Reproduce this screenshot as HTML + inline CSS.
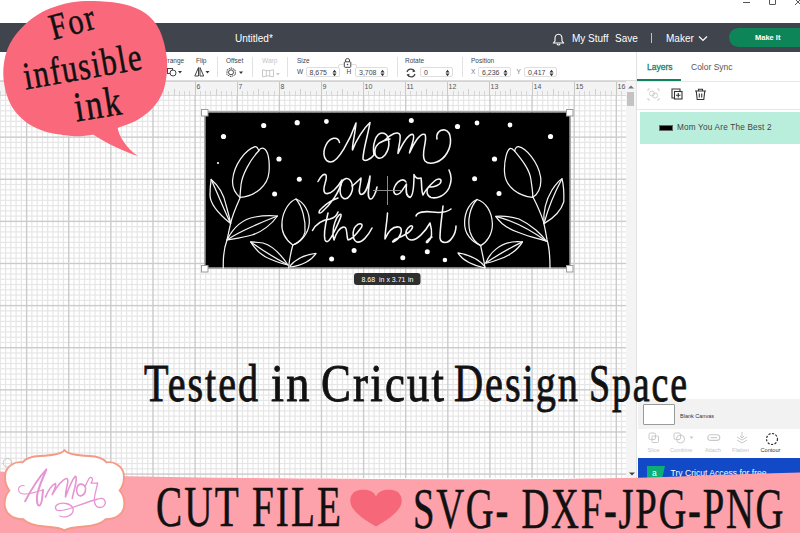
<!DOCTYPE html>
<html><head><meta charset="utf-8">
<style>
*{margin:0;padding:0;box-sizing:border-box}
html,body{width:800px;height:533px;overflow:hidden;background:#fff;font-family:"Liberation Sans",sans-serif}
.a{position:absolute}
#titlebar{left:0;top:0;width:800px;height:23px;background:#fff}
#header{left:0;top:23px;width:800px;height:29px;background:#40444c}
#toolbar{left:0;top:52px;width:637px;height:29px;background:#fff;border-bottom:1px solid #dcdcdc}
#ruler{left:0;top:81px;width:626px;height:14px;background:#f3f3f3;border-top:1px solid #d4d4d4}
#canvas{left:0;top:95px;width:626px;height:383px;background:#fff;overflow:hidden}
#scroll{left:626px;top:81px;width:10px;height:397px;background:#f4f4f4}
#panel{left:636px;top:52px;width:164px;height:430px;background:#fff;border-left:1px solid #e2e2e2}
.lbl{font-size:6.5px;color:#444}
.inp{height:10.5px;border:1px solid #dedede;border-radius:2px;font-size:7px;color:#444;background:#fff}
.tl{font-size:5.6px;color:#c4c4c4}
.bt{font-family:"Liberation Serif",serif;font-weight:normal;color:#111;white-space:nowrap;line-height:1;-webkit-text-stroke:0.9px #111}
.wt{color:#fff;font-size:10px}
</style></head><body>
<div id="titlebar" class="a">
 <div class="a" style="left:743px;top:2px;width:7px;height:1px;background:#555"></div>
 <div class="a" style="left:769px;top:-3px;width:7px;height:8px;border:1px solid #555;border-radius:1px"></div>
 <svg class="a" style="left:794px;top:-2px" width="8" height="8"><path d="M1 1 L7 7 M7 1 L1 7" stroke="#555" stroke-width="1"/></svg>
</div>
<div id="header" class="a">
 <div class="a wt" style="left:235px;top:10px;font-size:10px;letter-spacing:0px">Untitled*</div>
 <svg class="a" style="left:552px;top:10px" width="13" height="13" viewBox="0 0 13 13"><path d="M6.5 1.2 C4 1.2 3 3.2 3 5.5 V8 L1.3 10 H11.7 L10 8 V5.5 C10 3.2 9 1.2 6.5 1.2 Z M5 11 A1.6 1.6 0 0 0 8 11" fill="none" stroke="#fff" stroke-width="1.1" stroke-linejoin="round"/></svg>
 <div class="a wt" style="left:572px;top:10px">My Stuff</div>
 <div class="a wt" style="left:615px;top:10px">Save</div>
 <div class="a" style="left:651px;top:10px;width:1px;height:10px;background:#c9b7d0"></div>
 <div class="a wt" style="left:666px;top:10px">Maker</div>
 <svg class="a" style="left:698px;top:12px" width="10" height="7" viewBox="0 0 10 7"><path d="M1 1.5 L5 5.5 L9 1.5" fill="none" stroke="#fff" stroke-width="1.2"/></svg>
 <div class="a" style="left:729px;top:5px;width:90px;height:19px;border-radius:10px;background:#0e8558"></div>
 <div class="a" style="left:755px;top:10px;font-size:7.5px;font-weight:bold;color:#fff">Make It</div>
</div>
<div id="toolbar" class="a">
 <div class="a lbl" style="left:161px;top:5px">Arrange</div>
 <svg class="a" style="left:166px;top:15px" width="16" height="10"><rect x="1.5" y="1.5" width="5" height="5" fill="none" stroke="#444" stroke-width="1"/><circle cx="7" cy="6" r="3" fill="#fff" stroke="#444" stroke-width="1"/><path d="M12 4 h4 l-2 2.5z" fill="#333"/></svg>
 <div class="a lbl" style="left:196px;top:5px">Flip</div>
 <svg class="a" style="left:194px;top:15px" width="16" height="10"><path d="M4.5 0.5 L0.8 9 H4.5 Z M6 0.5 L9.7 9 H6 Z" fill="none" stroke="#444" stroke-width="1"/><path d="M11.5 4 h4 l-2 2.5z" fill="#333"/></svg>
 <div class="a" style="left:217px;top:5px;width:1px;height:20px;background:#e2e2e2"></div>
 <div class="a lbl" style="left:226px;top:5px">Offset</div>
 <svg class="a" style="left:226px;top:14.5px" width="18" height="11"><path d="M5 0.8 L9 2.8 L9.5 7.5 L5 9.8 L0.8 7.5 L1.2 2.8 Z" fill="none" stroke="#444" stroke-width="1" stroke-dasharray="1.5 0.8"/><circle cx="5" cy="5.3" r="2.5" fill="none" stroke="#444" stroke-width="1"/><path d="M13 4.5 h4 l-2 2.5z" fill="#333"/></svg>
 <div class="a" style="left:251.5px;top:5px;width:1px;height:20px;background:#e2e2e2"></div>
 <div class="a lbl" style="left:262px;top:5px;color:#c4c4c4">Warp</div>
 <svg class="a" style="left:262px;top:16.5px" width="18" height="9"><path d="M0.5 0.8 Q6 2.5 11.5 0.8 V7.8 Q6 6 0.5 7.8 Z M4.3 1.6 V7 M7.7 1.6 V7" fill="none" stroke="#c8c8c8" stroke-width="1"/><path d="M14 4 h4 l-2 2.5z" fill="#c8c8c8"/></svg>
 <div class="a" style="left:286.5px;top:5px;width:1px;height:20px;background:#e2e2e2"></div>
 <div class="a lbl" style="left:297px;top:5px">Size</div>
 <div class="a lbl" style="left:297px;top:16px">W</div>
 <div class="a inp" style="left:305.5px;top:14.5px;width:34px"><span class="a" style="left:3px;top:1px">8,675</span><svg class="a" style="right:2px;top:1.5px" width="5" height="8"><path d="M0.5 3.5 L2.5 0.8 L4.5 3.5 Z M0.5 4.5 L2.5 7.2 L4.5 4.5Z" fill="#333"/></svg></div>
 <svg class="a" style="left:337px;top:3.5px" width="21" height="12"><path d="M1.5 11 V10 Q1.5 8.5 3 8.5 H6.5 M14.5 8.5 H18 Q19.5 8.5 19.5 10 V11" fill="none" stroke="#d5d5d5" stroke-width="0.8"/><rect x="7.3" y="5.8" width="6.5" height="5.5" rx="0.8" fill="none" stroke="#444" stroke-width="1"/><path d="M8.6 5.8 V4 A2 2 0 0 1 12.5 4 V5.8" fill="none" stroke="#444" stroke-width="1"/><circle cx="10.55" cy="8.5" r="0.8" fill="#444"/></svg>
 <div class="a lbl" style="left:346.5px;top:16px">H</div>
 <div class="a inp" style="left:355px;top:14.5px;width:33px"><span class="a" style="left:3px;top:1px">3,708</span><svg class="a" style="right:2px;top:1.5px" width="5" height="8"><path d="M0.5 3.5 L2.5 0.8 L4.5 3.5 Z M0.5 4.5 L2.5 7.2 L4.5 4.5Z" fill="#333"/></svg></div>
 <div class="a" style="left:396.5px;top:5px;width:1px;height:20px;background:#e2e2e2"></div>
 <div class="a lbl" style="left:405px;top:5px">Rotate</div>
 <svg class="a" style="left:405px;top:15.5px" width="12" height="10"><path d="M2 4 A4 3.8 0 0 1 9.5 3.2 M10 6 A4 3.8 0 0 1 2.5 6.8" fill="none" stroke="#444" stroke-width="1.2"/><path d="M8 1 L10.5 3.5 L7.5 4.2Z M4 9 L1.5 6.5 L4.5 5.8Z" fill="#444"/></svg>
 <div class="a inp" style="left:420px;top:14.5px;width:33px"><span class="a" style="left:3px;top:1px">0</span><svg class="a" style="right:2px;top:1.5px" width="5" height="8"><path d="M0.5 3.5 L2.5 0.8 L4.5 3.5 Z M0.5 4.5 L2.5 7.2 L4.5 4.5Z" fill="#333"/></svg></div>
 <div class="a" style="left:462px;top:5px;width:1px;height:20px;background:#e2e2e2"></div>
 <div class="a lbl" style="left:471px;top:5px">Position</div>
 <div class="a lbl" style="left:471px;top:16px;color:#777">X</div>
 <div class="a inp" style="left:478px;top:14.5px;width:33px"><span class="a" style="left:3px;top:1px">6,236</span><svg class="a" style="right:2px;top:1.5px" width="5" height="8"><path d="M0.5 3.5 L2.5 0.8 L4.5 3.5 Z M0.5 4.5 L2.5 7.2 L4.5 4.5Z" fill="#333"/></svg></div>
 <div class="a lbl" style="left:516.5px;top:16px;color:#777">Y</div>
 <div class="a inp" style="left:524px;top:14.5px;width:33px"><span class="a" style="left:3px;top:1px">0,417</span><svg class="a" style="right:2px;top:1.5px" width="5" height="8"><path d="M0.5 3.5 L2.5 0.8 L4.5 3.5 Z M0.5 4.5 L2.5 7.2 L4.5 4.5Z" fill="#333"/></svg></div>
</div>
<div id="ruler" class="a"><svg class="a" style="left:0;top:0" width="626" height="14" shape-rendering="crispEdges"><rect x="0" y="9" width="1" height="5" fill="#d6d6d6"/><rect x="5" y="7" width="1" height="7" fill="#cfcfcf"/><rect x="10" y="9" width="1" height="5" fill="#d6d6d6"/><rect x="16" y="9" width="1" height="5" fill="#d6d6d6"/><rect x="21" y="9" width="1" height="5" fill="#d6d6d6"/><rect x="26" y="0" width="1" height="14" fill="#c8c8c8"/><rect x="31" y="9" width="1" height="5" fill="#d6d6d6"/><rect x="37" y="9" width="1" height="5" fill="#d6d6d6"/><rect x="42" y="9" width="1" height="5" fill="#d6d6d6"/><rect x="47" y="7" width="1" height="7" fill="#cfcfcf"/><rect x="52" y="9" width="1" height="5" fill="#d6d6d6"/><rect x="58" y="9" width="1" height="5" fill="#d6d6d6"/><rect x="63" y="9" width="1" height="5" fill="#d6d6d6"/><rect x="68" y="0" width="1" height="14" fill="#c8c8c8"/><rect x="74" y="9" width="1" height="5" fill="#d6d6d6"/><rect x="79" y="9" width="1" height="5" fill="#d6d6d6"/><rect x="84" y="9" width="1" height="5" fill="#d6d6d6"/><rect x="89" y="7" width="1" height="7" fill="#cfcfcf"/><rect x="95" y="9" width="1" height="5" fill="#d6d6d6"/><rect x="100" y="9" width="1" height="5" fill="#d6d6d6"/><rect x="105" y="9" width="1" height="5" fill="#d6d6d6"/><rect x="110" y="0" width="1" height="14" fill="#c8c8c8"/><rect x="116" y="9" width="1" height="5" fill="#d6d6d6"/><rect x="121" y="9" width="1" height="5" fill="#d6d6d6"/><rect x="126" y="9" width="1" height="5" fill="#d6d6d6"/><rect x="131" y="7" width="1" height="7" fill="#cfcfcf"/><rect x="137" y="9" width="1" height="5" fill="#d6d6d6"/><rect x="142" y="9" width="1" height="5" fill="#d6d6d6"/><rect x="147" y="9" width="1" height="5" fill="#d6d6d6"/><rect x="152" y="0" width="1" height="14" fill="#c8c8c8"/><rect x="158" y="9" width="1" height="5" fill="#d6d6d6"/><rect x="163" y="9" width="1" height="5" fill="#d6d6d6"/><rect x="168" y="9" width="1" height="5" fill="#d6d6d6"/><rect x="174" y="7" width="1" height="7" fill="#cfcfcf"/><rect x="179" y="9" width="1" height="5" fill="#d6d6d6"/><rect x="184" y="9" width="1" height="5" fill="#d6d6d6"/><rect x="189" y="9" width="1" height="5" fill="#d6d6d6"/><rect x="195" y="0" width="1" height="14" fill="#c8c8c8"/><rect x="200" y="9" width="1" height="5" fill="#d6d6d6"/><rect x="205" y="9" width="1" height="5" fill="#d6d6d6"/><rect x="210" y="9" width="1" height="5" fill="#d6d6d6"/><rect x="216" y="7" width="1" height="7" fill="#cfcfcf"/><rect x="221" y="9" width="1" height="5" fill="#d6d6d6"/><rect x="226" y="9" width="1" height="5" fill="#d6d6d6"/><rect x="231" y="9" width="1" height="5" fill="#d6d6d6"/><rect x="237" y="0" width="1" height="14" fill="#c8c8c8"/><rect x="242" y="9" width="1" height="5" fill="#d6d6d6"/><rect x="247" y="9" width="1" height="5" fill="#d6d6d6"/><rect x="253" y="9" width="1" height="5" fill="#d6d6d6"/><rect x="258" y="7" width="1" height="7" fill="#cfcfcf"/><rect x="263" y="9" width="1" height="5" fill="#d6d6d6"/><rect x="268" y="9" width="1" height="5" fill="#d6d6d6"/><rect x="274" y="9" width="1" height="5" fill="#d6d6d6"/><rect x="279" y="0" width="1" height="14" fill="#c8c8c8"/><rect x="284" y="9" width="1" height="5" fill="#d6d6d6"/><rect x="289" y="9" width="1" height="5" fill="#d6d6d6"/><rect x="295" y="9" width="1" height="5" fill="#d6d6d6"/><rect x="300" y="7" width="1" height="7" fill="#cfcfcf"/><rect x="305" y="9" width="1" height="5" fill="#d6d6d6"/><rect x="310" y="9" width="1" height="5" fill="#d6d6d6"/><rect x="316" y="9" width="1" height="5" fill="#d6d6d6"/><rect x="321" y="0" width="1" height="14" fill="#c8c8c8"/><rect x="326" y="9" width="1" height="5" fill="#d6d6d6"/><rect x="331" y="9" width="1" height="5" fill="#d6d6d6"/><rect x="337" y="9" width="1" height="5" fill="#d6d6d6"/><rect x="342" y="7" width="1" height="7" fill="#cfcfcf"/><rect x="347" y="9" width="1" height="5" fill="#d6d6d6"/><rect x="353" y="9" width="1" height="5" fill="#d6d6d6"/><rect x="358" y="9" width="1" height="5" fill="#d6d6d6"/><rect x="363" y="0" width="1" height="14" fill="#c8c8c8"/><rect x="368" y="9" width="1" height="5" fill="#d6d6d6"/><rect x="374" y="9" width="1" height="5" fill="#d6d6d6"/><rect x="379" y="9" width="1" height="5" fill="#d6d6d6"/><rect x="384" y="7" width="1" height="7" fill="#cfcfcf"/><rect x="389" y="9" width="1" height="5" fill="#d6d6d6"/><rect x="395" y="9" width="1" height="5" fill="#d6d6d6"/><rect x="400" y="9" width="1" height="5" fill="#d6d6d6"/><rect x="405" y="0" width="1" height="14" fill="#c8c8c8"/><rect x="410" y="9" width="1" height="5" fill="#d6d6d6"/><rect x="416" y="9" width="1" height="5" fill="#d6d6d6"/><rect x="421" y="9" width="1" height="5" fill="#d6d6d6"/><rect x="426" y="7" width="1" height="7" fill="#cfcfcf"/><rect x="432" y="9" width="1" height="5" fill="#d6d6d6"/><rect x="437" y="9" width="1" height="5" fill="#d6d6d6"/><rect x="442" y="9" width="1" height="5" fill="#d6d6d6"/><rect x="447" y="0" width="1" height="14" fill="#c8c8c8"/><rect x="453" y="9" width="1" height="5" fill="#d6d6d6"/><rect x="458" y="9" width="1" height="5" fill="#d6d6d6"/><rect x="463" y="9" width="1" height="5" fill="#d6d6d6"/><rect x="468" y="7" width="1" height="7" fill="#cfcfcf"/><rect x="474" y="9" width="1" height="5" fill="#d6d6d6"/><rect x="479" y="9" width="1" height="5" fill="#d6d6d6"/><rect x="484" y="9" width="1" height="5" fill="#d6d6d6"/><rect x="489" y="0" width="1" height="14" fill="#c8c8c8"/><rect x="495" y="9" width="1" height="5" fill="#d6d6d6"/><rect x="500" y="9" width="1" height="5" fill="#d6d6d6"/><rect x="505" y="9" width="1" height="5" fill="#d6d6d6"/><rect x="510" y="7" width="1" height="7" fill="#cfcfcf"/><rect x="516" y="9" width="1" height="5" fill="#d6d6d6"/><rect x="521" y="9" width="1" height="5" fill="#d6d6d6"/><rect x="526" y="9" width="1" height="5" fill="#d6d6d6"/><rect x="532" y="0" width="1" height="14" fill="#c8c8c8"/><rect x="537" y="9" width="1" height="5" fill="#d6d6d6"/><rect x="542" y="9" width="1" height="5" fill="#d6d6d6"/><rect x="547" y="9" width="1" height="5" fill="#d6d6d6"/><rect x="553" y="7" width="1" height="7" fill="#cfcfcf"/><rect x="558" y="9" width="1" height="5" fill="#d6d6d6"/><rect x="563" y="9" width="1" height="5" fill="#d6d6d6"/><rect x="568" y="9" width="1" height="5" fill="#d6d6d6"/><rect x="574" y="0" width="1" height="14" fill="#c8c8c8"/><rect x="579" y="9" width="1" height="5" fill="#d6d6d6"/><rect x="584" y="9" width="1" height="5" fill="#d6d6d6"/><rect x="589" y="9" width="1" height="5" fill="#d6d6d6"/><rect x="595" y="7" width="1" height="7" fill="#cfcfcf"/><rect x="600" y="9" width="1" height="5" fill="#d6d6d6"/><rect x="605" y="9" width="1" height="5" fill="#d6d6d6"/><rect x="611" y="9" width="1" height="5" fill="#d6d6d6"/><rect x="616" y="0" width="1" height="14" fill="#c8c8c8"/><rect x="621" y="9" width="1" height="5" fill="#d6d6d6"/><text x="27.5" y="7" font-size="7" fill="#555" font-family="Liberation Sans">2</text><text x="69.5" y="7" font-size="7" fill="#555" font-family="Liberation Sans">3</text><text x="111.5" y="7" font-size="7" fill="#555" font-family="Liberation Sans">4</text><text x="153.5" y="7" font-size="7" fill="#555" font-family="Liberation Sans">5</text><text x="196.5" y="7" font-size="7" fill="#555" font-family="Liberation Sans">6</text><text x="238.5" y="7" font-size="7" fill="#555" font-family="Liberation Sans">7</text><text x="280.5" y="7" font-size="7" fill="#555" font-family="Liberation Sans">8</text><text x="322.5" y="7" font-size="7" fill="#555" font-family="Liberation Sans">9</text><text x="364.5" y="7" font-size="7" fill="#555" font-family="Liberation Sans">10</text><text x="406.5" y="7" font-size="7" fill="#555" font-family="Liberation Sans">11</text><text x="448.5" y="7" font-size="7" fill="#555" font-family="Liberation Sans">12</text><text x="490.5" y="7" font-size="7" fill="#555" font-family="Liberation Sans">13</text><text x="533.5" y="7" font-size="7" fill="#555" font-family="Liberation Sans">14</text><text x="575.5" y="7" font-size="7" fill="#555" font-family="Liberation Sans">15</text><text x="617.5" y="7" font-size="7" fill="#555" font-family="Liberation Sans">16</text></svg></div>
<div id="canvas" class="a"><svg class="a" style="left:0;top:0" width="626" height="383"><rect x="-0.31" y="0" width="1.2" height="383" fill="#e6e6e6"/><rect x="4.96" y="0" width="1.2" height="383" fill="#e6e6e6"/><rect x="10.22" y="0" width="1.2" height="383" fill="#e6e6e6"/><rect x="15.49" y="0" width="1.2" height="383" fill="#e6e6e6"/><rect x="20.75" y="0" width="1.2" height="383" fill="#e6e6e6"/><rect x="31.29" y="0" width="1.2" height="383" fill="#e6e6e6"/><rect x="36.55" y="0" width="1.2" height="383" fill="#e6e6e6"/><rect x="41.82" y="0" width="1.2" height="383" fill="#e6e6e6"/><rect x="47.08" y="0" width="1.2" height="383" fill="#e6e6e6"/><rect x="52.35" y="0" width="1.2" height="383" fill="#e6e6e6"/><rect x="57.61" y="0" width="1.2" height="383" fill="#e6e6e6"/><rect x="62.88" y="0" width="1.2" height="383" fill="#e6e6e6"/><rect x="73.41" y="0" width="1.2" height="383" fill="#e6e6e6"/><rect x="78.67" y="0" width="1.2" height="383" fill="#e6e6e6"/><rect x="83.94" y="0" width="1.2" height="383" fill="#e6e6e6"/><rect x="89.20" y="0" width="1.2" height="383" fill="#e6e6e6"/><rect x="94.47" y="0" width="1.2" height="383" fill="#e6e6e6"/><rect x="99.73" y="0" width="1.2" height="383" fill="#e6e6e6"/><rect x="105.00" y="0" width="1.2" height="383" fill="#e6e6e6"/><rect x="115.53" y="0" width="1.2" height="383" fill="#e6e6e6"/><rect x="120.79" y="0" width="1.2" height="383" fill="#e6e6e6"/><rect x="126.06" y="0" width="1.2" height="383" fill="#e6e6e6"/><rect x="131.32" y="0" width="1.2" height="383" fill="#e6e6e6"/><rect x="136.59" y="0" width="1.2" height="383" fill="#e6e6e6"/><rect x="141.85" y="0" width="1.2" height="383" fill="#e6e6e6"/><rect x="147.12" y="0" width="1.2" height="383" fill="#e6e6e6"/><rect x="157.64" y="0" width="1.2" height="383" fill="#e6e6e6"/><rect x="162.91" y="0" width="1.2" height="383" fill="#e6e6e6"/><rect x="168.17" y="0" width="1.2" height="383" fill="#e6e6e6"/><rect x="173.44" y="0" width="1.2" height="383" fill="#e6e6e6"/><rect x="178.70" y="0" width="1.2" height="383" fill="#e6e6e6"/><rect x="183.97" y="0" width="1.2" height="383" fill="#e6e6e6"/><rect x="189.23" y="0" width="1.2" height="383" fill="#e6e6e6"/><rect x="199.76" y="0" width="1.2" height="383" fill="#e6e6e6"/><rect x="205.03" y="0" width="1.2" height="383" fill="#e6e6e6"/><rect x="210.29" y="0" width="1.2" height="383" fill="#e6e6e6"/><rect x="215.56" y="0" width="1.2" height="383" fill="#e6e6e6"/><rect x="220.82" y="0" width="1.2" height="383" fill="#e6e6e6"/><rect x="226.09" y="0" width="1.2" height="383" fill="#e6e6e6"/><rect x="231.35" y="0" width="1.2" height="383" fill="#e6e6e6"/><rect x="241.88" y="0" width="1.2" height="383" fill="#e6e6e6"/><rect x="247.15" y="0" width="1.2" height="383" fill="#e6e6e6"/><rect x="252.41" y="0" width="1.2" height="383" fill="#e6e6e6"/><rect x="257.68" y="0" width="1.2" height="383" fill="#e6e6e6"/><rect x="262.94" y="0" width="1.2" height="383" fill="#e6e6e6"/><rect x="268.21" y="0" width="1.2" height="383" fill="#e6e6e6"/><rect x="273.47" y="0" width="1.2" height="383" fill="#e6e6e6"/><rect x="284.00" y="0" width="1.2" height="383" fill="#e6e6e6"/><rect x="289.27" y="0" width="1.2" height="383" fill="#e6e6e6"/><rect x="294.53" y="0" width="1.2" height="383" fill="#e6e6e6"/><rect x="299.80" y="0" width="1.2" height="383" fill="#e6e6e6"/><rect x="305.06" y="0" width="1.2" height="383" fill="#e6e6e6"/><rect x="310.33" y="0" width="1.2" height="383" fill="#e6e6e6"/><rect x="315.59" y="0" width="1.2" height="383" fill="#e6e6e6"/><rect x="326.12" y="0" width="1.2" height="383" fill="#e6e6e6"/><rect x="331.39" y="0" width="1.2" height="383" fill="#e6e6e6"/><rect x="336.65" y="0" width="1.2" height="383" fill="#e6e6e6"/><rect x="341.92" y="0" width="1.2" height="383" fill="#e6e6e6"/><rect x="347.18" y="0" width="1.2" height="383" fill="#e6e6e6"/><rect x="352.45" y="0" width="1.2" height="383" fill="#e6e6e6"/><rect x="357.71" y="0" width="1.2" height="383" fill="#e6e6e6"/><rect x="368.24" y="0" width="1.2" height="383" fill="#e6e6e6"/><rect x="373.51" y="0" width="1.2" height="383" fill="#e6e6e6"/><rect x="378.77" y="0" width="1.2" height="383" fill="#e6e6e6"/><rect x="384.04" y="0" width="1.2" height="383" fill="#e6e6e6"/><rect x="389.30" y="0" width="1.2" height="383" fill="#e6e6e6"/><rect x="394.57" y="0" width="1.2" height="383" fill="#e6e6e6"/><rect x="399.83" y="0" width="1.2" height="383" fill="#e6e6e6"/><rect x="410.36" y="0" width="1.2" height="383" fill="#e6e6e6"/><rect x="415.63" y="0" width="1.2" height="383" fill="#e6e6e6"/><rect x="420.89" y="0" width="1.2" height="383" fill="#e6e6e6"/><rect x="426.16" y="0" width="1.2" height="383" fill="#e6e6e6"/><rect x="431.42" y="0" width="1.2" height="383" fill="#e6e6e6"/><rect x="436.69" y="0" width="1.2" height="383" fill="#e6e6e6"/><rect x="441.95" y="0" width="1.2" height="383" fill="#e6e6e6"/><rect x="452.48" y="0" width="1.2" height="383" fill="#e6e6e6"/><rect x="457.75" y="0" width="1.2" height="383" fill="#e6e6e6"/><rect x="463.01" y="0" width="1.2" height="383" fill="#e6e6e6"/><rect x="468.28" y="0" width="1.2" height="383" fill="#e6e6e6"/><rect x="473.54" y="0" width="1.2" height="383" fill="#e6e6e6"/><rect x="478.81" y="0" width="1.2" height="383" fill="#e6e6e6"/><rect x="484.07" y="0" width="1.2" height="383" fill="#e6e6e6"/><rect x="494.60" y="0" width="1.2" height="383" fill="#e6e6e6"/><rect x="499.87" y="0" width="1.2" height="383" fill="#e6e6e6"/><rect x="505.13" y="0" width="1.2" height="383" fill="#e6e6e6"/><rect x="510.40" y="0" width="1.2" height="383" fill="#e6e6e6"/><rect x="515.66" y="0" width="1.2" height="383" fill="#e6e6e6"/><rect x="520.93" y="0" width="1.2" height="383" fill="#e6e6e6"/><rect x="526.19" y="0" width="1.2" height="383" fill="#e6e6e6"/><rect x="536.72" y="0" width="1.2" height="383" fill="#e6e6e6"/><rect x="541.99" y="0" width="1.2" height="383" fill="#e6e6e6"/><rect x="547.25" y="0" width="1.2" height="383" fill="#e6e6e6"/><rect x="552.52" y="0" width="1.2" height="383" fill="#e6e6e6"/><rect x="557.78" y="0" width="1.2" height="383" fill="#e6e6e6"/><rect x="563.05" y="0" width="1.2" height="383" fill="#e6e6e6"/><rect x="568.31" y="0" width="1.2" height="383" fill="#e6e6e6"/><rect x="578.84" y="0" width="1.2" height="383" fill="#e6e6e6"/><rect x="584.11" y="0" width="1.2" height="383" fill="#e6e6e6"/><rect x="589.37" y="0" width="1.2" height="383" fill="#e6e6e6"/><rect x="594.64" y="0" width="1.2" height="383" fill="#e6e6e6"/><rect x="599.90" y="0" width="1.2" height="383" fill="#e6e6e6"/><rect x="605.17" y="0" width="1.2" height="383" fill="#e6e6e6"/><rect x="610.43" y="0" width="1.2" height="383" fill="#e6e6e6"/><rect x="620.96" y="0" width="1.2" height="383" fill="#e6e6e6"/><rect x="626.23" y="0" width="1.2" height="383" fill="#e6e6e6"/><rect x="0" y="4.67" width="626" height="1.2" fill="#e6e6e6"/><rect x="0" y="9.93" width="626" height="1.2" fill="#e6e6e6"/><rect x="0" y="15.20" width="626" height="1.2" fill="#e6e6e6"/><rect x="0" y="20.46" width="626" height="1.2" fill="#e6e6e6"/><rect x="0" y="25.73" width="626" height="1.2" fill="#e6e6e6"/><rect x="0" y="30.99" width="626" height="1.2" fill="#e6e6e6"/><rect x="0" y="36.26" width="626" height="1.2" fill="#e6e6e6"/><rect x="0" y="46.79" width="626" height="1.2" fill="#e6e6e6"/><rect x="0" y="52.05" width="626" height="1.2" fill="#e6e6e6"/><rect x="0" y="57.32" width="626" height="1.2" fill="#e6e6e6"/><rect x="0" y="62.58" width="626" height="1.2" fill="#e6e6e6"/><rect x="0" y="67.85" width="626" height="1.2" fill="#e6e6e6"/><rect x="0" y="73.11" width="626" height="1.2" fill="#e6e6e6"/><rect x="0" y="78.38" width="626" height="1.2" fill="#e6e6e6"/><rect x="0" y="88.91" width="626" height="1.2" fill="#e6e6e6"/><rect x="0" y="94.17" width="626" height="1.2" fill="#e6e6e6"/><rect x="0" y="99.44" width="626" height="1.2" fill="#e6e6e6"/><rect x="0" y="104.70" width="626" height="1.2" fill="#e6e6e6"/><rect x="0" y="109.97" width="626" height="1.2" fill="#e6e6e6"/><rect x="0" y="115.23" width="626" height="1.2" fill="#e6e6e6"/><rect x="0" y="120.50" width="626" height="1.2" fill="#e6e6e6"/><rect x="0" y="131.03" width="626" height="1.2" fill="#e6e6e6"/><rect x="0" y="136.29" width="626" height="1.2" fill="#e6e6e6"/><rect x="0" y="141.56" width="626" height="1.2" fill="#e6e6e6"/><rect x="0" y="146.82" width="626" height="1.2" fill="#e6e6e6"/><rect x="0" y="152.09" width="626" height="1.2" fill="#e6e6e6"/><rect x="0" y="157.35" width="626" height="1.2" fill="#e6e6e6"/><rect x="0" y="162.62" width="626" height="1.2" fill="#e6e6e6"/><rect x="0" y="173.15" width="626" height="1.2" fill="#e6e6e6"/><rect x="0" y="178.41" width="626" height="1.2" fill="#e6e6e6"/><rect x="0" y="183.68" width="626" height="1.2" fill="#e6e6e6"/><rect x="0" y="188.94" width="626" height="1.2" fill="#e6e6e6"/><rect x="0" y="194.21" width="626" height="1.2" fill="#e6e6e6"/><rect x="0" y="199.47" width="626" height="1.2" fill="#e6e6e6"/><rect x="0" y="204.74" width="626" height="1.2" fill="#e6e6e6"/><rect x="0" y="215.27" width="626" height="1.2" fill="#e6e6e6"/><rect x="0" y="220.53" width="626" height="1.2" fill="#e6e6e6"/><rect x="0" y="225.80" width="626" height="1.2" fill="#e6e6e6"/><rect x="0" y="231.06" width="626" height="1.2" fill="#e6e6e6"/><rect x="0" y="236.33" width="626" height="1.2" fill="#e6e6e6"/><rect x="0" y="241.59" width="626" height="1.2" fill="#e6e6e6"/><rect x="0" y="246.86" width="626" height="1.2" fill="#e6e6e6"/><rect x="0" y="257.38" width="626" height="1.2" fill="#e6e6e6"/><rect x="0" y="262.65" width="626" height="1.2" fill="#e6e6e6"/><rect x="0" y="267.92" width="626" height="1.2" fill="#e6e6e6"/><rect x="0" y="273.18" width="626" height="1.2" fill="#e6e6e6"/><rect x="0" y="278.44" width="626" height="1.2" fill="#e6e6e6"/><rect x="0" y="283.71" width="626" height="1.2" fill="#e6e6e6"/><rect x="0" y="288.98" width="626" height="1.2" fill="#e6e6e6"/><rect x="0" y="299.50" width="626" height="1.2" fill="#e6e6e6"/><rect x="0" y="304.77" width="626" height="1.2" fill="#e6e6e6"/><rect x="0" y="310.04" width="626" height="1.2" fill="#e6e6e6"/><rect x="0" y="315.30" width="626" height="1.2" fill="#e6e6e6"/><rect x="0" y="320.56" width="626" height="1.2" fill="#e6e6e6"/><rect x="0" y="325.83" width="626" height="1.2" fill="#e6e6e6"/><rect x="0" y="331.10" width="626" height="1.2" fill="#e6e6e6"/><rect x="0" y="341.62" width="626" height="1.2" fill="#e6e6e6"/><rect x="0" y="346.89" width="626" height="1.2" fill="#e6e6e6"/><rect x="0" y="352.16" width="626" height="1.2" fill="#e6e6e6"/><rect x="0" y="357.42" width="626" height="1.2" fill="#e6e6e6"/><rect x="0" y="362.69" width="626" height="1.2" fill="#e6e6e6"/><rect x="0" y="367.95" width="626" height="1.2" fill="#e6e6e6"/><rect x="0" y="373.22" width="626" height="1.2" fill="#e6e6e6"/><rect x="25.92" y="0" width="1.4" height="383" fill="#cbcbcb"/><rect x="68.04" y="0" width="1.4" height="383" fill="#cbcbcb"/><rect x="110.16" y="0" width="1.4" height="383" fill="#cbcbcb"/><rect x="152.28" y="0" width="1.4" height="383" fill="#cbcbcb"/><rect x="194.40" y="0" width="1.4" height="383" fill="#cbcbcb"/><rect x="236.52" y="0" width="1.4" height="383" fill="#cbcbcb"/><rect x="278.64" y="0" width="1.4" height="383" fill="#cbcbcb"/><rect x="320.76" y="0" width="1.4" height="383" fill="#cbcbcb"/><rect x="362.88" y="0" width="1.4" height="383" fill="#cbcbcb"/><rect x="405.00" y="0" width="1.4" height="383" fill="#cbcbcb"/><rect x="447.12" y="0" width="1.4" height="383" fill="#cbcbcb"/><rect x="489.24" y="0" width="1.4" height="383" fill="#cbcbcb"/><rect x="531.36" y="0" width="1.4" height="383" fill="#cbcbcb"/><rect x="573.48" y="0" width="1.4" height="383" fill="#cbcbcb"/><rect x="615.60" y="0" width="1.4" height="383" fill="#cbcbcb"/><rect x="0" y="-0.70" width="626" height="1.4" fill="#cbcbcb"/><rect x="0" y="41.42" width="626" height="1.4" fill="#cbcbcb"/><rect x="0" y="83.54" width="626" height="1.4" fill="#cbcbcb"/><rect x="0" y="125.66" width="626" height="1.4" fill="#cbcbcb"/><rect x="0" y="167.78" width="626" height="1.4" fill="#cbcbcb"/><rect x="0" y="209.90" width="626" height="1.4" fill="#cbcbcb"/><rect x="0" y="252.02" width="626" height="1.4" fill="#cbcbcb"/><rect x="0" y="294.14" width="626" height="1.4" fill="#cbcbcb"/><rect x="0" y="336.26" width="626" height="1.4" fill="#cbcbcb"/><rect x="0" y="378.38" width="626" height="1.4" fill="#cbcbcb"/></svg></div>
<div id="scroll" class="a"><svg class="a" style="left:1px;top:3px" width="8" height="6"><path d="M1 4.5 L4 1.5 L7 4.5Z" fill="#777"/></svg><div class="a" style="left:0.5px;top:11px;width:7.5px;height:13.5px;background:#c3c3c3"></div><svg class="a" style="left:1.5px;top:389.5px" width="8" height="6"><path d="M1 1.5 L4 4.5 L7 1.5Z" fill="#444"/></svg></div>
<div id="panel" class="a">
 <div class="a" style="left:10px;top:10px;font-size:8.5px;color:#1b7f6a;-webkit-text-stroke:0.3px #1b7f6a">Layers</div>
 <div class="a" style="left:54px;top:10px;font-size:8.5px;color:#555">Color Sync</div>
 <div class="a" style="left:0;top:27px;width:44px;height:2px;background:#138060"></div>
 <div class="a" style="left:0;top:28.5px;width:163px;height:1px;background:#e8e8e8"></div>
 <svg class="a" style="left:10px;top:36px" width="14" height="13"><g fill="none" stroke="#cfcfcf" stroke-width="1"><path d="M1 3 V1 H3 M10 1 H12 V3 M12 10 V12 H10 M3 12 H1 V10"/><circle cx="5" cy="5.5" r="2.5"/><circle cx="8" cy="7.5" r="2.5"/></g></svg>
 <svg class="a" style="left:34px;top:36px" width="13" height="13"><g fill="none" stroke="#333" stroke-width="1.1"><path d="M3 10 H1 V1 H9 V3"/><rect x="3.5" y="3.5" width="7.5" height="7.5" fill="#fff"/><path d="M7.25 5 V9.5 M5 7.25 H9.5"/></g></svg>
 <svg class="a" style="left:57px;top:36px" width="13" height="13"><g fill="none" stroke="#333" stroke-width="1.1"><path d="M1 3 H12 M4.5 3 V1.2 H8.5 V3 M2.3 3.5 L3.2 11.5 H9.8 L10.7 3.5 M5.3 5.5 V9.5 M7.7 5.5 V9.5"/></g></svg>
 <div class="a" style="left:0;top:57px;width:163px;height:1px;background:#e6e6e6"></div>
 <div class="a" style="left:3px;top:60px;width:160px;height:32px;background:#b9eedd"></div>
 <div class="a" style="left:22px;top:73px;width:14px;height:5.5px;background:#000;border:0.5px solid #666"></div>
 <div class="a" style="left:40px;top:70.5px;font-size:8.2px;color:#444;letter-spacing:0.2px">Mom You Are The Best 2</div>
 <div class="a" style="left:1px;top:347px;width:162px;height:30px;background:#f2f2f2"></div>
 <div class="a" style="left:6px;top:352px;width:31.5px;height:20.5px;background:#fff;border:1px solid #9a9a9a;border-radius:1px"></div>
 <div class="a" style="left:43px;top:361px;font-size:5.5px;color:#333">Blank Canvas</div>
 <svg class="a" style="left:11px;top:380px" width="12" height="12"><g fill="none" stroke="#c9c9c9" stroke-width="1"><rect x="1" y="1" width="6.5" height="6.5" rx="1.5"/><rect x="4" y="4" width="6.5" height="6.5" rx="1"/></g></svg>
 <div class="a tl" style="left:10.5px;top:395px">Slice</div>
 <svg class="a" style="left:36px;top:380px" width="22" height="12"><g fill="none" stroke="#c9c9c9" stroke-width="1"><rect x="1" y="1" width="6.5" height="6.5" rx="1.5"/><circle cx="7.5" cy="7" r="4"/></g><path d="M16.5 4.5 h4 l-2 2.5z" fill="#c9c9c9"/></svg>
 <div class="a tl" style="left:33px;top:395px">Combine</div>
 <svg class="a" style="left:70px;top:382px" width="14" height="8"><g fill="none" stroke="#c9c9c9" stroke-width="1.1"><rect x="0.8" y="0.8" width="12" height="5.6" rx="2.8"/><path d="M3.5 3.6 H10"/></g></svg>
 <div class="a tl" style="left:68px;top:395px">Attach</div>
 <svg class="a" style="left:99px;top:379px" width="12" height="13"><g fill="none" stroke="#c9c9c9" stroke-width="1"><path d="M1 6 L6 9 L11 6 M1 9 L6 12 L11 9 M6 1 V7 M4 5 L6 7 L8 5"/></g></svg>
 <div class="a tl" style="left:95px;top:395px">Flatten</div>
 <svg class="a" style="left:128px;top:379.5px" width="14" height="14"><circle cx="7" cy="7" r="5.5" fill="none" stroke="#333" stroke-width="1.2" stroke-dasharray="2.2 1.4"/></svg>
 <div class="a tl" style="left:123.5px;top:395px;color:#333">Contour</div>
 <div class="a" style="left:1px;top:405.5px;width:163px;height:26px;background:#1149c6"></div>
 <svg class="a" style="left:10px;top:413.5px" width="19" height="14"><path d="M0 0 H18 L14.8 14 H0 Z" fill="#0cad76"/><text x="5" y="9.5" font-size="8.5" fill="#fff" font-family="Liberation Sans">a</text></svg>
 <div class="a" style="left:33.5px;top:416px;font-size:8.6px;color:#fff">Try Cricut Access for free</div>
</div>
<!--DESIGN--><svg class="a" style="left:0;top:0" width="800" height="533" viewBox="0 0 800 533"><rect x="204.5" y="111.5" width="366" height="157" fill="none" stroke="#a8a8a8" stroke-width="1"/><rect x="205.5" y="112.5" width="364" height="155" fill="#000"/><g fill="#fff"><circle cx="223.5" cy="136.5" r="2.6"/><circle cx="263.7" cy="125.5" r="2.6"/><circle cx="297.2" cy="122.7" r="2.6"/><circle cx="326.4" cy="121.5" r="2.4"/><circle cx="218" cy="163" r="1.1"/><circle cx="279" cy="159" r="2.6"/><circle cx="299.3" cy="179.2" r="2.5"/><circle cx="274.6" cy="194" r="2.5"/><circle cx="411.3" cy="120.5" r="2.5"/><circle cx="457.5" cy="126.5" r="2.6"/><circle cx="477" cy="123" r="2.4"/><circle cx="510" cy="125" r="2.4"/><circle cx="550.5" cy="136.5" r="2.6"/><circle cx="494.5" cy="159" r="2.6"/><circle cx="474.6" cy="178.7" r="2.5"/><circle cx="499" cy="193.6" r="2.5"/><circle cx="354.1" cy="250.6" r="2.5"/><circle cx="331.6" cy="258.9" r="2.5"/><circle cx="402.8" cy="257.7" r="2.5"/><circle cx="427.3" cy="251.8" r="2.5"/><circle cx="444.9" cy="260" r="2.3"/></g><g fill="none" stroke="#f4f4f4" stroke-width="1.25" stroke-linecap="round" stroke-linejoin="round"><path d="M240,197.4 C236,194 232,188 232.6,180 C234,165 245,150 255,146.7 C257,146.5 258,148.5 258.8,150.7 C260,148.5 262,148 263.5,148.4 C268,150 270,160 269,172 C268,186 255,196 240,197.4 Z"/><path d="M258.8,150.7 C250,160 242,175 241,185 C240.5,190 240,195 240,197.4"/><path d="M240,198 C236,207 232,216 230.6,223.6 C229,230 228,236 227,240 C224,248 223,258 223.3,268"/><path d="M230.6,223.6 C220,215 210,205 210,195 C210,186 211,181 211.2,179.4 C218,185 224,195 226,205 C228,212 230,219 230.6,223.6 Z"/><path d="M211.2,179.4 C216,190 222,205 230.6,223.6"/><path d="M227,240 C233,228 243,219 255,217 C263,215.5 272,215.5 277.4,216 C272,224 262,232 252,235 C242,238 232,239 227,240 Z"/><path d="M227,240 C238,232 252,226 277.4,216"/><path d="M292.8,245 C286,240 281,232 282,222 C283,210 290,201 296,199 C304,202 310,212 309.3,223 C308.5,234 300,243 292.8,245 Z"/><path d="M296,199 C302,206 306,220 305,232 C304,238 298,243 292.8,245"/><path d="M292.8,245 C291,252 289,260 288.7,268"/><path d="M288,265 C282,256 274,246 263,243 C257,242 253,242 250.7,241.9 C255,249 262,256 270,259 C277,262 283,264 288,265 Z"/><path d="M250.7,241.9 C262,250 275,258 288,265"/><path d="M290,266 C295,260 302,255 316,253.4 C312,260 302,266 290,267"/><path d="M532.7,197.4 C520,196 505,188 504.5,172 C504,160 507,150 510.2,148.4 C512,148 513.5,150 514.7,151.2 C515,148 517,146.5 518.5,146.7 C526,148 538,162 540.6,177 C542,188 537,195 532.7,197.4 Z"/><path d="M514.7,151.2 C522,160 530,170 531,180 C532,188 533,192 532.7,197.4"/><path d="M533.1,197.3 C537,205 541,214 543.4,221.4 C545,228 546,234 547,239.7 C549,246 550,255 550,268"/><path d="M544,223.6 C543,212 546,200 552,190 C556,184 560,180 562,178.8 C564,186 564,195 563.8,201.7 C561,211 552,219 544,223.6 Z"/><path d="M562,178.8 C556,190 549,205 544,223.6"/><path d="M546.3,241.2 C542,235 532,225 519,219 C508,215.5 500,216 495.8,216.3 C500,223 508,229 520,233 C530,237 540,239 546.3,241.2 Z"/><path d="M495.8,216.3 C510,220 528,228 546.3,241.2"/><path d="M480.7,245.6 C472,242 464,234 464.6,222 C465,210 471,202 477,199.5 C486,202 492,212 492.4,224 C492.5,235 486,243 480.7,245.6 Z"/><path d="M477,199.5 C470,207 467,220 470,232 C472,238 476,243 480.7,245.6"/><path d="M480.7,245.6 C482,253 484,260 485,268"/><path d="M485.8,263 C490,252 500,244 512,242 C517,241.5 520,241.8 522.4,241.9 C518,250 508,257 497,260 C492,262 488,263 485.8,263 Z"/><path d="M522.4,241.9 C510,248 496,256 485.8,263"/><path d="M485,267 C480,260 470,255 458,252.9 C462,260 472,265 485,268"/></g><g fill="none" stroke="#f6f6f6" stroke-width="1.55" stroke-linecap="round" stroke-linejoin="round"><path d="M339.5,142.5 C338,136 330,137 326,145 C322,153 324,162 331,162 C338,162 350,140 356,123 C355,135 352,145 352.5,150 C356,140 364,128 370,122.5 C368,135 363,150 363,159 C364,162 370,160 374,155 C372,145 376,133 382,133 C390,133 391,147 385,155 C380,161 374,158 375,150 C376,142 385,140 390,139"/><path d="M385,140 C390,135 398,130 400,135 C401,140 398,148 398,153.5 C402,145 408,133 413,134.5 C416,137 410,148 409.5,153 C413,145 420,132 425,134.5 C428,140 420,155 425,161 C430,166 442,162 447,153 C452,145 452,132 445,130 C439,129 436,134 437,139"/><path d="M318,181.5 C321,176 324,173 326,175 C328,180 321,189 325,193 C330,196 338,187 342,180 C340,192 330,205 322,212 C318,215 318,211 322,208 C326,204 332,200 338,198"/><path d="M346,178.5 C340,180 338,194 343,198 C348,201 353,193 352.5,186 C352,181 349,178 346,178.5 Z"/><path d="M352,186 C355,184 358,181 361,178 C361,185 357,193 361,194.5 C366,194.5 369,182 370,176 C370,184 366,196 370,199 C373,200 376,192 377,187"/><path d="M406,182 C404,178 398,180 395,186 C392,192 395,197 400,193 C403,190 405,186 406.5,184 C406,189 405,196 410,197.5 C413,196 414,185 414,174.5 C415,178 418,179 421,178 C422,183 421,190 423,195 C425,191 429,186 434,181.5 C437,178.5 441.5,178 441,181.5 C440.5,185 434,187.5 428.5,187 C426,190 426.5,196 431,197.5 C437,199 445,196 449,188 C452,181 451,174 449,170"/><path d="M312.5,230.5 C316,224 322,220 330,219 C334,218 337,215 338,212"/><path d="M328,213 C326,222 323,233 325,240 C327,244 330,240 333,234 C336,228 340,220 341,216 C342,212 337,215 335,222 C332,230 333,238 334,240 C336,233 340,227 344,227 C348,227 346,236 348,240 C352,240 358,232 361,228 C364,224 360,222 356,226 C352,230 352,240 357,242 C362,243 368,236 372,228"/><path d="M387.5,213 C387,222 385,232 385,239 C388,232 393,226 399,227 C404,229 400,238 395,241 C391,244 392,240 398,238 C403,236 408,234 411,230 C414,226 412,224 408,228 C404,233 406,240 412,240 C417,240 425,232 430,223 C432,230 433,238 428,242 C425,244 426,240 432,237"/><path d="M443,206 C442,216 440,228 440,238 C441,244 448,244 452,238 C455,234 456,230 456,226"/><path d="M416,216 C417,212 425,211 432,212 C440,213 446,213 451,209"/></g><path d="M373,190.5 H402 M387.5,176 V205" stroke="#9a9a9a" stroke-width="0.9"/><rect x="201.5" y="109.5" width="6.5" height="6.5" fill="#fff" stroke="#9c9c9c" stroke-width="1"/><rect x="566.5" y="109.5" width="6.5" height="6.5" fill="#fff" stroke="#9c9c9c" stroke-width="1"/><rect x="201.5" y="265.5" width="6.5" height="6.5" fill="#fff" stroke="#9c9c9c" stroke-width="1"/><rect x="566.5" y="265.5" width="6.5" height="6.5" fill="#fff" stroke="#9c9c9c" stroke-width="1"/><rect x="354" y="273" width="66.5" height="12" rx="3" fill="#2e2e2e"/><text x="361.5" y="282" font-size="7" fill="#fff" font-family="Liberation Sans">8.68</text><text x="379" y="282" font-size="7" fill="#fff" font-family="Liberation Sans">in x 3.71</text><text x="408" y="282" font-size="7" fill="#fff" font-family="Liberation Sans">in</text></svg><!--/DESIGN-->
<!--OV--><svg class="a" style="left:0;top:0" width="800" height="533" viewBox="0 0 800 533"><path d="M93.5,134.8 C90.4,135.0 83.1,136.8 75.0,136.2 C66.9,135.6 53.5,134.1 45.0,131.5 C36.5,128.9 29.9,125.4 24.0,120.5 C18.1,115.6 12.9,109.6 9.5,102.0 C6.1,94.4 3.6,83.8 3.3,75.0 C3.0,66.2 4.6,56.8 7.5,49.0 C10.4,41.2 15.1,34.8 21.0,28.5 C26.9,22.2 34.5,15.9 43.0,11.5 C51.5,7.1 62.5,3.9 72.0,2.2 C81.5,0.5 91.2,0.8 100.0,1.2 C108.8,1.6 117.5,2.5 125.0,4.5 C132.5,6.5 139.2,8.8 145.0,13.0 C150.8,17.2 155.9,22.5 159.5,30.0 C163.1,37.5 165.9,48.8 166.8,58.0 C167.7,67.2 166.8,77.3 165.0,85.0 C163.2,92.7 160.3,98.3 156.0,104.0 C151.7,109.7 145.4,115.0 139.0,119.0 C132.6,123.0 121.2,126.5 117.7,128.0  C119,136 126,148 138,156.1 C126,152 109,145 93.8,135 Z" fill="#f9697b"/></svg>
<div class="a bt" style="left:45px;top:10px;font-size:37px;transform:rotate(-15deg) scaleX(0.82);letter-spacing:2px;transform-origin:0 0;-webkit-text-stroke:0.5px #111">For</div>
<div class="a bt" style="left:20px;top:57px;font-size:39px;transform:rotate(-10deg) scaleX(0.79);letter-spacing:1.8px;transform-origin:0 0;-webkit-text-stroke:0.5px #111">infusible</div>
<div class="a bt" style="left:71px;top:87px;font-size:42px;transform:rotate(-9deg) scaleX(0.8);letter-spacing:2.5px;transform-origin:0 0;-webkit-text-stroke:0.5px #111">ink</div>
<div class="a bt" style="left:144.2px;top:357px;font-size:53px;transform:scaleX(0.757);letter-spacing:2.6px;-webkit-text-stroke:0.9px #151515;transform-origin:0 0">Tested</div><div class="a bt" style="left:271.1px;top:357px;font-size:53px;transform:scaleX(0.878);letter-spacing:2.6px;-webkit-text-stroke:0.9px #151515;transform-origin:0 0">in</div><div class="a bt" style="left:320.8px;top:357px;font-size:53px;transform:scaleX(0.846);letter-spacing:2.6px;-webkit-text-stroke:0.9px #151515;transform-origin:0 0">Cricut</div><div class="a bt" style="left:454.2px;top:357px;font-size:53px;transform:scaleX(0.76);letter-spacing:2.6px;-webkit-text-stroke:0.9px #151515;transform-origin:0 0">Design</div><div class="a bt" style="left:589.4px;top:357px;font-size:53px;transform:scaleX(0.716);letter-spacing:2.6px;-webkit-text-stroke:0.9px #151515;transform-origin:0 0">Space</div>
<svg class="a" style="left:0;top:0" width="800" height="533" viewBox="0 0 800 533"><path d="M0,471.5 C40,474 120,476.5 200,477.5 C300,478.5 420,479.5 500,479.3 C580,479 640,478 680,476.5 C730,474.5 770,473.5 800,472.5 V533 H0 Z" fill="#fda1ab"/>
<path d="M64.5,450.2 C61.0,454.5 52.0,455.6 40.0,456.0 C31.0,456.3 26.0,458.0 22.5,462.4 C15.0,461.0 6.5,466.0 5.3,474.0 C4.5,481.0 6.0,486.5 9.4,490.5 C5.5,495.0 4.3,501.0 4.8,506.0 C5.5,513.0 12.0,519.5 23.5,519.3 C27.0,523.0 35.0,525.8 45.0,526.5 C55.0,527.2 61.0,527.8 64.5,530.5 C68.0,527.8 74.0,527.2 84.0,526.5 C94.0,525.8 102.0,523.0 105.5,519.3 C117.0,519.5 123.5,513.0 124.2,506.0 C124.7,501.0 123.5,495.0 119.6,490.5 C123.0,486.5 124.5,481.0 123.7,474.0 C122.5,466.0 114.0,461.0 106.5,462.4 C103.0,458.0 98.0,456.3 89.0,456.0 C77.0,455.6 68.0,454.5 64.5,450.2 Z" fill="#fff" stroke="#f49a85" stroke-width="1.9"/><g fill="none" stroke="#e794d2" stroke-linecap="round" stroke-linejoin="round"><path d="M24.3,485.7 C21,485 18,487 18.6,490 C19,493 22,494.3 26,494 C32,493.5 38,491.5 43,490" stroke-width="1.1"/><path d="M25.1,501.3 C31,490 39,477 46.3,469.6" stroke-width="1.9"/><path d="M46.3,469.6 C43,478 38,488 37,496 C36.5,502 37.5,506 39.5,505.5 C41.5,505 42.5,497 43,490" stroke-width="2.0"/><path d="M45.4,497.1 C48,491 52,485 55.5,483.6 C56.5,487 53,492 52.2,494.6 C56,488 62,480 66,478.5 C68.5,478 68,482 67,486 C66,490 65.5,494 65.5,497 C68,490 72,480 75.2,476.2 C77,476 76,482 75,487 C74,491 72.5,496 72.3,498.5" stroke-width="1.6"/><path d="M80.9,484.1 C77,484 75.5,490 77.5,494 C79,497 84,496.5 85.4,491 C86.5,487 84,484 80.9,484.1" stroke-width="1.6"/><path d="M85.4,486 C87,482 88.5,478.5 90,477.4 C92.5,477 93.5,479.5 91,483 C93,483.5 96,483 97.7,483 C96.5,489 94,496 94.4,500 C94.5,505 96,507.5 100,507.5 C104,507.5 106,504 105,501 C104,498.5 101,498 98,499 C90,501 80,505 70,508.5 C62,511 56,512 55.5,508 C55,504.5 60,502.5 66,503.5 C72,504.5 75,509 72,513.5 C69,517.5 63,517.5 60,516" stroke-width="1.3"/></g><circle cx="7.5" cy="462.8" r="4.3" fill="none" stroke="#c0c0c0" stroke-width="0.9"/>
<path d="M338,364" fill="none"/>
<path d="M376,496.5 C373,490 366,489.5 360,490 C352,491 349.5,497 350.5,503 C352,511 363,519 376,526.5 C389,519 400,511 401.5,503 C402.5,497 400,491 392,490 C386,489.5 379,490 376,496.5 Z" fill="#f7677a"/>
</svg>
<div class="a bt" style="left:156px;top:479px;font-size:56px;transform:scaleX(0.7);letter-spacing:3px;transform-origin:0 0;-webkit-text-stroke:0.5px #111">CUT FILE</div>
<div class="a bt" style="left:413px;top:481px;font-size:56px;transform:scaleX(0.69);letter-spacing:2.5px;transform-origin:0 0;-webkit-text-stroke:0.5px #111">SVG- DXF-JPG-PNG</div>

<!--/OV-->
</body></html>
